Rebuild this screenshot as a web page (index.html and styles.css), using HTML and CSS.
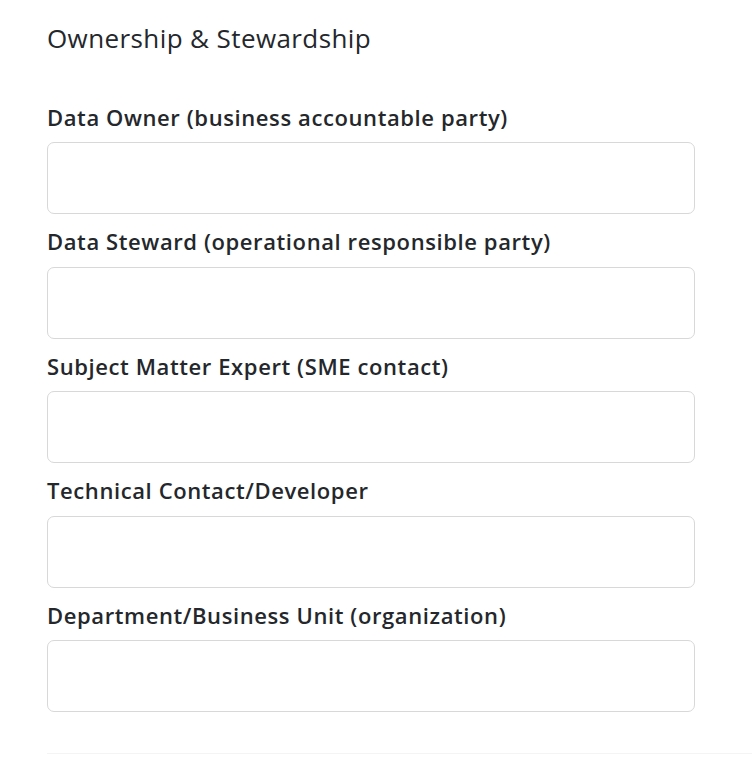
FILE: index.html
```html
<!DOCTYPE html>
<html lang="en">
<head>
  <meta charset="utf-8" />
  <meta name="viewport" content="width=device-width,initial-scale=1" />
  <title>Ownership &amp; Stewardship</title>
  <link rel="stylesheet" href="styles.css">
</head>
<body>
  <section class="panel">
    <h2>Ownership &amp; Stewardship</h2>
    <div class="fields">
      <label class="field">
        <span class="field-label">Data Owner (business accountable party)</span>
        <input type="text" />
      </label>
      <label class="field">
        <span class="field-label">Data Steward (operational responsible party)</span>
        <input type="text" />
      </label>
      <label class="field">
        <span class="field-label">Subject Matter Expert (SME contact)</span>
        <input type="text" />
      </label>
      <label class="field">
        <span class="field-label">Technical Contact/Developer</span>
        <input type="text" />
      </label>
      <label class="field">
        <span class="field-label">Department/Business Unit (organization)</span>
        <input type="text" />
      </label>
    </div>
  </section>
</body>
</html>
```

FILE: styles.css
```css
/* base */
body {
  margin: 0;
  background: #fff;
  font-family: "Open Sans", "Noto Sans", sans-serif;
  color: #24272b;
}

/* section panel */
.panel {
  margin-left: 47px;
  padding: 23px 0 41px;
  border-bottom: 1px solid #f4f4f4;
}
.panel h2 {
  margin: 0 0 51.5px;
  font-size: 26px;
  font-weight: 400;
  line-height: 30px;
  letter-spacing: 0.4px;
}

.fields {
  display: flex; flex-direction: column;
  gap: 15px;
  width: 648px;
}
.field {
  display: flex; flex-direction: column;
  gap: 12.5px;
}
.field-label {
  font-size: 22px;
  font-weight: 600;
  line-height: 25px;
  letter-spacing: 0.6px;
}
.field input {
  box-sizing: border-box;
  height: 72px;
  border: 1px solid #d8d8d8;
  border-radius: 7px;
  padding: 0 16px;
  font: inherit;
  background: #fff;
}
```
